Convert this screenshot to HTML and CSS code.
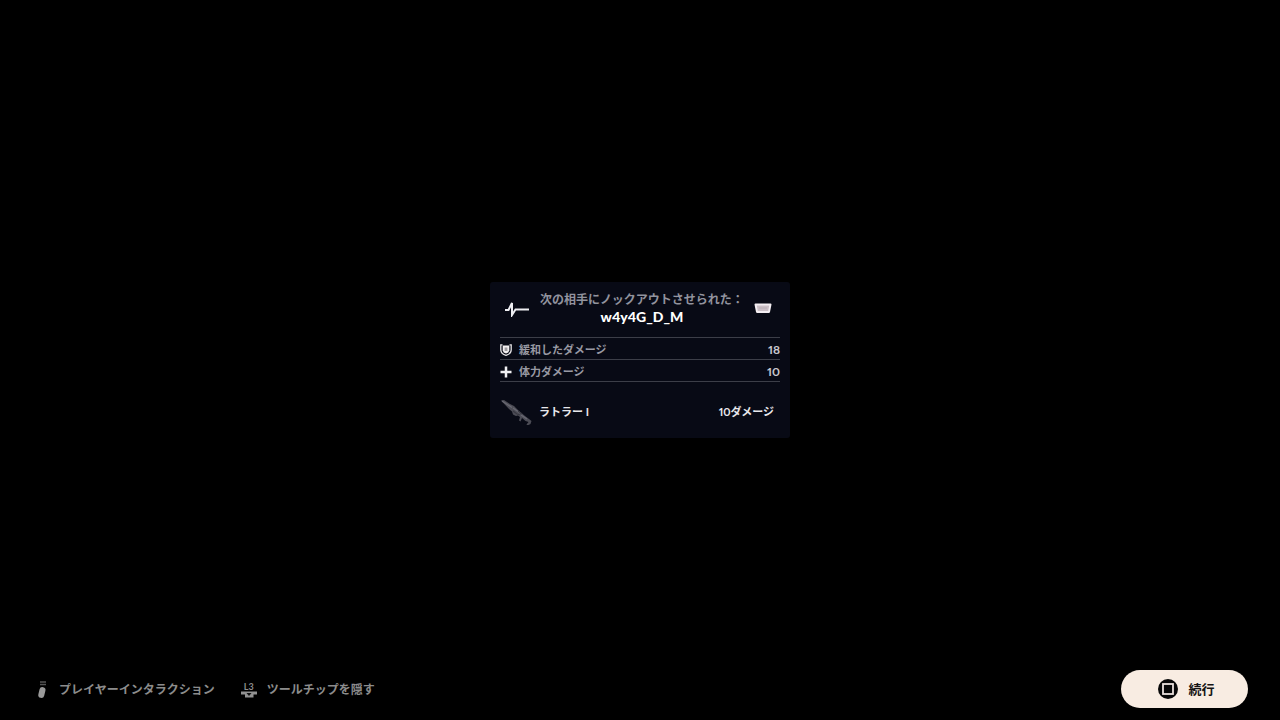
FILE: index.html
```html
<!DOCTYPE html>
<html lang="ja">
<head>
<meta charset="utf-8">
<meta name="viewport" content="width=device-width, initial-scale=1">
<title>ノックアウト</title>
<link rel="stylesheet" href="styles.css">
</head>
<body>
<main class="stage">
  <section class="card">
    <header class="card-head">
      <svg class="pulse" viewBox="0 0 26 18" aria-hidden="true"><path d="M1 11h3.500L8 4V16L11.500 10.500H25" fill="none" stroke="#eeeef2" stroke-width="2"/></svg>
      <div class="titles">
        <p class="caption">次の相手にノックアウトさせられた：</p>
        <h1 class="player">w4y4G_D_M</h1>
      </div>
      <svg class="badge" viewBox="0 0 18 12" aria-hidden="true"><path d="M.5 2.500Q.5 1.500 1.500 1.500h15q1 0 1 1L16 10q-.2 1-1.200 1H3.200Q2.200 11 2 10z" fill="#f4eef2"/><path d="M2.800 3.500h12.400l-1 5.500H3.800z" fill="#cbbfc6"/><path d="M5 6h8" stroke="#b9aeb5"/></svg>
    </header>
    <table class="stats">
      <tr>
        <th scope="row"><span class="label"><svg class="stat-icon" viewBox="0 0 12 12" aria-hidden="true"><path d="M2.500 .8H.8V6Q1 10 6 11.300 11 10 11.200 6V.8H9.500" fill="none" stroke="#e6e4e6" stroke-width="1.300"/><path d="M2.700 1.500h6.600v5Q8.800 8.800 6 9.500 3.200 8.800 2.700 6.500z" fill="#f2eff0"/><path d="M4.600 3.500h2.800v3.500H4.600z" fill="#9c999d"/></svg>緩和したダメージ</span></th>
        <td>18</td>
      </tr>
      <tr>
        <th scope="row"><span class="label"><svg class="stat-icon" viewBox="0 0 12 12" aria-hidden="true"><path d="M6 .5v11M.5 6h11" stroke="#f1f1f4" stroke-width="2.500"/></svg>体力ダメージ</span></th>
        <td>10</td>
      </tr>
    </table>
    <div class="weapon">
      <svg class="gun" viewBox="0 0 32 26" aria-hidden="true"><path d="M0 1.500l3-.5 6 4 4 2 5 5 6 5 4 3 2.500 2-1 3-3 1.500-1-1 2-2.500-3-1-3.500-3-1.500 3.500-1.500-1 1-3.500-2-1.500-2 .5-3-1.500-1-3-3-2.500z" fill="#4c4c55"/><path d="M1 2l10 6.500M12 9l7 5M20 16l6 4" stroke="#686872" stroke-width="1.300"/><path d="M12 12l4 3 3 1M17 12l4 3" fill="none" stroke="#383841" stroke-width="1.200"/></svg>
      <span>ラトラー I</span>
      <span class="damage">10ダメージ</span>
    </div>
  </section>
</main>
<footer class="bar">
  <button class="hint" type="button"><svg class="pad" viewBox="0 0 14 18" aria-hidden="true"><path d="M5 1h6M5 3.500h6" stroke="#555" stroke-width="1.300"/><rect x="4" y="6" width="6" height="11" rx="3" transform="rotate(14 7 11)" fill="#9a9a9a"/></svg>プレイヤーインタラクション</button>
  <button class="hint" type="button"><span class="stick"><span>L3</span><svg class="stick-icon" viewBox="0 0 16 7" aria-hidden="true"><path d="M0 .5h16v3h-3.500V6.500H4V3.500H0z" fill="#929292"/><path d="M5.500 2h5L8 5z" fill="#111"/></svg></span>ツールチップを隠す</button>
  <button class="continue" type="button"><svg class="square" viewBox="0 0 20 20" aria-hidden="true"><circle cx="10" cy="10" r="10" fill="#080808"/><rect x="5" y="5" width="10" height="10" fill="none" stroke="#e9dfdc" stroke-width="1.800"/></svg>続行</button>
</footer>
</body>
</html>
```
FILE: styles.css
```css
* {
  box-sizing: border-box;
}

body {
  margin: 0;
  min-height: 100vh;
  display: grid;
  align-items: center;
  background: #000;
  color: #e8e8ec;
  font-family: Lato, "Noto Sans CJK JP", sans-serif;
  font-size: 11px;
  font-weight: 700;
  font-variant-numeric: proportional-nums;
  line-height: 16px;
}

.stage,
.bar {
  grid-area: 1 / 1;
}

.stage {
  display: flex;
  justify-content: center;
}

.card {
  width: 300px;
  padding: 8px 10px 10px;
  border-radius: 3px;
  background: #080a15;
}

.card-head {
  display: flex;
  align-items: center;
  justify-content: space-between;
  padding: 0 8px 12px 4px;
}

.pulse {
  width: 26px;
  height: 18px;
}

.badge {
  width: 18px;
  height: 12px;
}

.titles {
  text-align: center;
  white-space: nowrap;
}

.caption,
.player {
  margin: 0;
}

.caption {
  color: #92939e;
  font-size: 12px;
  line-height: 19px;
}

.player {
  color: #fff;
  font-size: 14px;
  font-weight: 900;
  line-height: 16px;
}

.stats {
  width: 100%;
  border-collapse: collapse;
  border-top: 1px solid #3c3e48;
}

.stats tr {
  height: 22px;
  border-bottom: 1px solid #3c3e48;
}

.stats th,
.stats td {
  padding: 2px 0 0;
}

.stats th {
  color: #9899a3;
  text-align: left;
}

.stats td {
  color: #c8c8ce;
  font-size: 12px;
  text-align: right;
}

.label {
  display: flex;
  align-items: center;
  gap: 7px;
}

.stat-icon {
  width: 12px;
  height: 12px;
}

.weapon {
  display: flex;
  align-items: center;
  gap: 6px;
  padding: 17px 6px 3px 1px;
}

.gun {
  width: 32px;
  height: 26px;
}

.damage {
  margin-left: auto;
}

.bar {
  align-self: end;
  display: flex;
  align-items: center;
  gap: 26px;
  padding: 0 32px 12px 35px;
}

button {
  display: flex;
  align-items: center;
  border: 0;
  padding: 0;
  font: inherit;
}

.hint {
  gap: 10px;
  padding-top: 2px;
  background: none;
  color: #8c8c8c;
  font-size: 12px;
}

.pad {
  width: 14px;
  height: 18px;
}

.stick {
  display: flex;
  flex-direction: column;
  align-items: center;
  font-size: 9px;
  line-height: 9px;
}

.stick-icon {
  width: 16px;
  height: 7px;
}

.continue {
  justify-content: center;
  gap: 10px;
  width: 127px;
  height: 38px;
  margin-left: auto;
  padding-left: 4px;
  border-radius: 19px;
  background: #f8ece2;
  color: #151313;
  font-size: 13px;
}

.square {
  width: 20px;
  height: 20px;
}
```
